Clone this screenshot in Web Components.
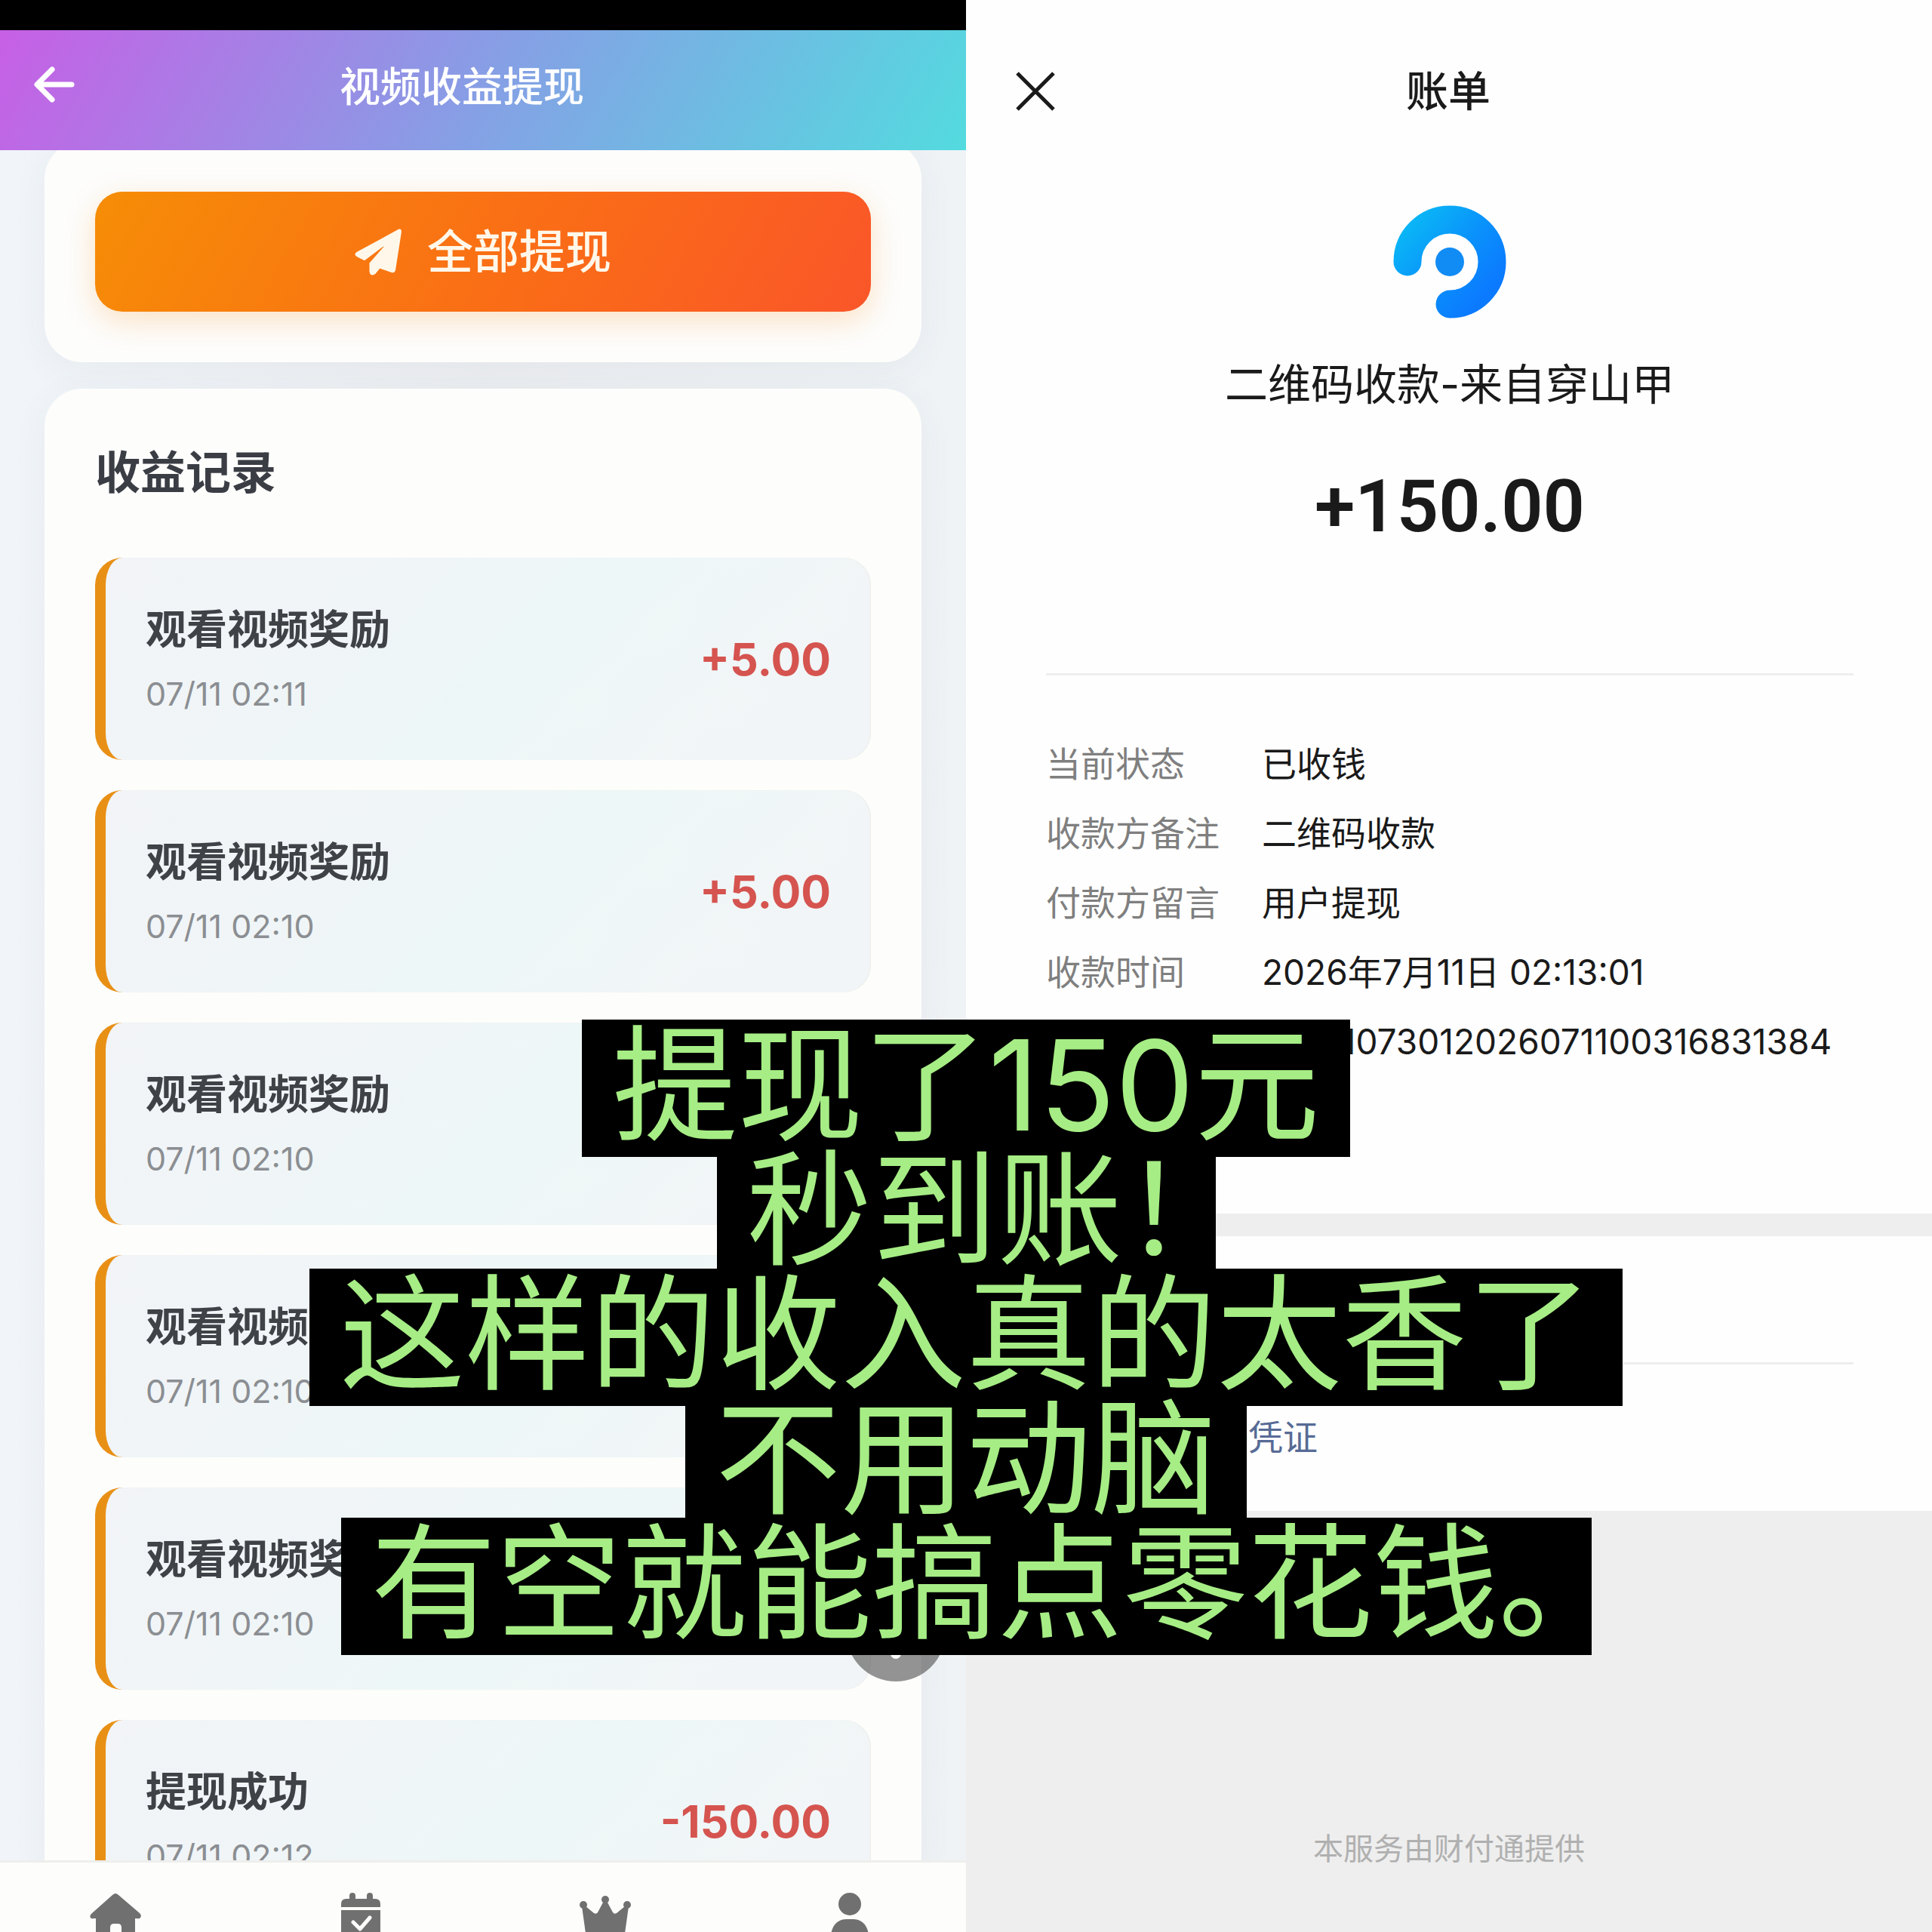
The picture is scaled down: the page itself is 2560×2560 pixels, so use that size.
<!DOCTYPE html>
<html lang="zh-CN">
<head>
<meta charset="utf-8">
<meta name="viewport" content="width=device-width, initial-scale=1">
<title>视频收益提现</title>
<style>
  body {
    margin: 0;
    background: #fff;
    font-family: Inter, "Noto Sans CJK SC", sans-serif;
  }
</style>
</head>
<body>
<split-page>
  <earnings-screen slot="left" heading="视频收益提现">
    <record-item label="观看视频奖励" time="07/11 02:11" amount="+5.00"></record-item>
    <record-item label="观看视频奖励" time="07/11 02:10" amount="+5.00"></record-item>
    <record-item label="观看视频奖励" time="07/11 02:10"></record-item>
    <record-item label="观看视频奖励" time="07/11 02:10"></record-item>
    <record-item label="观看视频奖励" time="07/11 02:10"></record-item>
    <record-item label="提现成功" time="07/11 02:12" amount="-150.00"></record-item>
  </earnings-screen>
  <bill-screen slot="right" heading="账单" payer="二维码收款-来自穿山甲" amount="+150.00">
    <bill-row label="当前状态">已收钱</bill-row>
    <bill-row label="收款方备注">二维码收款</bill-row>
    <bill-row label="付款方留言">用户提现</bill-row>
    <bill-row label="收款时间">2026年7月11日 02:13:01</bill-row>
    <bill-row>10001073012026071100316831384</bill-row>
  </bill-screen>
  <caption-stack slot="caption">
    <caption-line>提现了150元</caption-line>
    <caption-line>秒到账！</caption-line>
    <caption-line>这样的收入真的太香了</caption-line>
    <caption-line>不用动脑</caption-line>
    <caption-line>有空就能搞点零花钱。</caption-line>
  </caption-stack>
</split-page>

<script>
  const define = (name, render) => {
    customElements.define(name, class extends HTMLElement {
      connectedCallback() {
        if (this.shadowRoot) return;
        this.attachShadow({ mode: "open" }).innerHTML = render(this);
      }
    });
  };
  const attr = (el, name) => el.getAttribute(name) || "";

  /* Two screens side by side, with a caption laid over both */
  define("split-page", () => `
    <style>
      :host { display: block; position: relative; height: 100vh; overflow: hidden; }
      .panes { display: flex; height: 100%; }
      .panes > div { flex: 1; min-width: 0; height: 100%; }
    </style>
    <div class="panes">
      <div><slot name="left"></slot></div>
      <div><slot name="right"></slot></div>
    </div>
    <slot name="caption"></slot>`);

  define("earnings-screen", el => `
    <style>
      :host { display: flex; flex-direction: column; height: 100%; position: relative; background: #edf0f4; overflow: hidden; }
      .status { flex: none; height: 40px; background: #000; }
      header {
        flex: none; display: flex; align-items: center; height: 159px; box-sizing: border-box; padding: 0 44px;
        background: linear-gradient(120deg, #c75fe5 0%, #869fe5 50%, #53dbdf 100%);
        color: #fff;
      }
      button { font: inherit; border: 0; padding: 0; color: inherit; background: none; cursor: pointer; }
      .back { display: flex; width: 56px; padding-bottom: 16px; }
      h1 { flex: 1; margin: 0; padding-right: 112px; text-align: center; font-size: 54px; line-height: 72px; padding-bottom: 8px; font-weight: 500; }
      main { flex: 1; min-height: 0; overflow: hidden; padding: 0 59px; display: flex; flex-direction: column; gap: 35px; background: linear-gradient(90deg, #f1f5f9, #eceef1 50%, #eff3f6); }
      section { flex: none; padding: 67px; border-radius: 50px; background: #fdfdfc; box-shadow: 0 10px 48px rgba(60, 70, 90, .05); }
      .action { margin-top: -12px; }
      .withdraw {
        display: flex; align-items: center; justify-content: center; gap: 34px; width: 100%; height: 159px;
        border-radius: 36px; color: #fff8ea; font-size: 61px; line-height: 80px; font-weight: 500;
        background: linear-gradient(120deg, #f68d06 0%, #fa6d16 55%, #fa5629 100%);
        box-shadow: 0 12px 40px rgba(246, 140, 20, .24);
      }
      h2 { margin: 0 0 69px; font-size: 60px; line-height: 88px; font-weight: 600; color: #3a3d44; }
      .list { display: flex; flex-direction: column; gap: 40px; }
      nav {
        flex: none; display: flex; justify-content: space-between; height: 95px; box-sizing: border-box;
        padding: 40px 119px 0; border-top: 3px solid #eeeeed; background: #fdfdfc; overflow: hidden;
      }
      nav a { display: block; width: 68px; color: #6f706f; }
      svg { display: block; }
      .float { position: absolute; right: 27px; bottom: 332px; width: 132px; height: 132px; border-radius: 50%; background: rgba(60, 60, 60, .55); display: flex; align-items: center; justify-content: center; }
    </style>
    <div class="status"></div>
    <header>
      <button class="back" aria-label="返回">
        <svg width="56" height="48" viewBox="0 0 56 48" fill="none" stroke="#fff" stroke-width="7" stroke-linecap="round" stroke-linejoin="round"><path d="M25 4 5 24l20 20M6 24h45"/></svg>
      </button>
      <h1>${attr(el, "heading")}</h1>
    </header>
    <main>
      <section class="action">
        <button class="withdraw">
          <svg width="62" height="62" viewBox="0 0 62 62" fill="currentColor" stroke="currentColor" stroke-width="2" stroke-linejoin="round"><path d="M59 1.500Q61 1 61 4L53 55Q52 58 49 57L33 51.500 27 59Q21 63 20.500 56V46L39 25Q41 21 37 23L13 41 3 36Q0 34 3 32Z"/></svg>
          <span>全部提现</span>
        </button>
      </section>
      <section>
        <h2>收益记录</h2>
        <div class="list"><slot></slot></div>
      </section>
    </main>
    <nav>
      <a href="#home" aria-label="首页">
        <svg width="68" height="68" viewBox="0 0 68 68" fill="currentColor"><path d="M30 3Q34-1 38 3L66 27Q69 30 67 33 66 35 62 34H60V68H42V46Q42 41 37 41H32Q27 41 27 46V68H8V34H5Q1 35 .5 32 0 29 3 27Z"/></svg>
      </a>
      <a href="#tasks" aria-label="任务">
        <svg width="68" height="68" viewBox="0 0 68 68"><path fill="currentColor" d="M8 19V15Q8 8 15 8H19V4Q19 0 23 0T27 4V8H42V4Q42 0 46 0T50 4V8H53Q60 8 60 15V19ZM8 23H60V68H8Z"/><path d="M24 39l9 9 13-15" fill="none" stroke="#fdfdfc" stroke-width="5" stroke-linecap="round" stroke-linejoin="round"/></svg>
      </a>
      <a href="#vip" aria-label="会员">
        <svg width="68" height="68" viewBox="0 0 68 68" fill="currentColor"><circle cx="34" cy="9" r="5"/><circle cx="5" cy="16" r="5"/><circle cx="63" cy="16" r="5"/><path d="M32 11H36L44 26Q46 29 49 27L60 18 65 18 58 68H10L3 18 8 18 19 27Q22 29 24 26Z"/></svg>
      </a>
      <a href="#me" aria-label="我的">
        <svg width="68" height="68" viewBox="0 0 68 68" fill="currentColor"><circle cx="33" cy="15" r="15"/><path d="M7 68V62Q9 35 29 35H37Q57 35 59 62V68Z"/></svg>
      </a>
    </nav>
    <button class="float" aria-label="更多">
      <svg width="84" height="84" viewBox="0 0 84 84" fill="#fff"><circle cx="42" cy="14" r="7"/><circle cx="42" cy="42" r="7"/><circle cx="42" cy="71" r="7"/></svg>
    </button>`);

  define("record-item", el => `
    <style>
      :host {
        display: flex; align-items: center; justify-content: space-between; box-sizing: border-box;
        padding: 51px 53px 49px; border-left: 14px solid #e89016; border-radius: 36px;
        background: linear-gradient(135deg, #f2f4f7 0%, #f0f5f7 30%, #edf7f7 55%, #f2f5f7 85%);
        box-shadow: inset -1px 0 1px rgba(225, 222, 205, .4);
      }
      .text { display: flex; flex-direction: column; }
      .label { font-size: 54px; line-height: 90px; font-weight: 600; color: #3f4246; }
      .time { font-size: 43px; line-height: 78px; color: #8b8e92; }
      .amount { font-size: 59px; line-height: 72px; font-weight: 700; color: #d5544f; }
    </style>
    <div class="text">
      <span class="label">${attr(el, "label")}</span>
      <span class="time">${attr(el, "time")}</span>
    </div>
    <span class="amount">${attr(el, "amount")}</span>`);

  define("bill-screen", el => `
    <style>
      :host { display: flex; flex-direction: column; height: 100%; background: #eeeeee; color: #1a1a1a; }
      .sheet { background: #fefefe; }
      .bill { padding: 73px 104px 182px 106px; }
      header { display: flex; align-items: center; height: 96px; margin: 0 0 103px -44px; }
      .close { border: 0; padding: 0; background: none; display: flex; width: 60px; color: inherit; cursor: pointer; }
      svg { display: block; }
      h1 { flex: 1; margin: 0; padding-right: 20px; text-align: center; font-size: 56px; line-height: 72px; font-weight: 500; }
      .summary { display: flex; flex-direction: column; align-items: center; }
      .payer { margin: 48px 0 0; font-size: 57px; line-height: 80px; }
      .amount { margin: 61px 0 0; font-family: Roboto, sans-serif; font-size: 97px; line-height: 120px; font-weight: 600; }
      hr { margin: 0; border: 0; height: 3px; background: #eeeeee; }
      .summary + hr { margin: 161px 0 71px; }
      .service { margin-top: 30px; padding: 167px 104px 52px 98px; }
      .service hr { margin: 0 0 0 8px; }
      .service a { display: inline-block; margin-top: 50px; font-size: 46px; line-height: 92px; color: #576b95; text-decoration: none; }
      footer { flex: 1; display: flex; align-items: flex-end; justify-content: center; padding-bottom: 80px; font-size: 40px; line-height: 60px; color: #b0b0b0; }
    </style>
    <div class="sheet bill">
      <header>
        <button class="close" aria-label="关闭">
          <svg width="60" height="60" viewBox="0 0 60 60" fill="none" stroke="currentColor" stroke-width="5"><path d="M6 6 54 54M54 6 6 54"/></svg>
        </button>
        <h1>${attr(el, "heading")}</h1>
      </header>
      <div class="summary">
        <svg width="150" height="150" viewBox="0 0 150 150">
          <defs><linearGradient id="g" gradientUnits="userSpaceOnUse" x1="20" y1="30" x2="120" y2="120"><stop offset="0" stop-color="#0ab4f6"/><stop offset=".5" stop-color="#0a93fb"/><stop offset="1" stop-color="#0b7aff"/></linearGradient></defs>
          <path d="M19 75A56 56 0 1 1 75 131" fill="none" stroke="url(#g)" stroke-width="37" stroke-linecap="round"/>
          <circle cx="75" cy="75" r="19" fill="#128cf5"/>
        </svg>
        <p class="payer">${attr(el, "payer")}</p>
        <p class="amount">${attr(el, "amount")}</p>
      </div>
      <hr>
      <slot></slot>
    </div>
    <div class="sheet service">
      <hr>
      <a href="#voucher">申请转账电子凭证</a>
    </div>
    <footer>本服务由财付通提供</footer>`);

  define("bill-row", el => `
    <style>
      :host { display: flex; font-size: 46px; line-height: 92px; white-space: nowrap; }
      .label { flex: none; width: 286px; color: #7f7f7f; }
    </style>
    <span class="label">${attr(el, "label")}</span>
    <span><slot></slot></span>`);

  define("caption-stack", () => `
    <style>
      :host { position: absolute; left: 0; right: 0; top: 1351px; display: flex; flex-direction: column; align-items: center; }
    </style>
    <slot></slot>`);

  define("caption-line", () => `
    <style>
      :host {
        display: block; padding: 2px 40px 10px; margin-bottom: -17px; background: #000; color: #a6ed85;
        font-size: 166px; line-height: 170px; white-space: nowrap; font-feature-settings: "halt";
      }
    </style>
    <slot></slot>`);
</script>
</body>
</html>
